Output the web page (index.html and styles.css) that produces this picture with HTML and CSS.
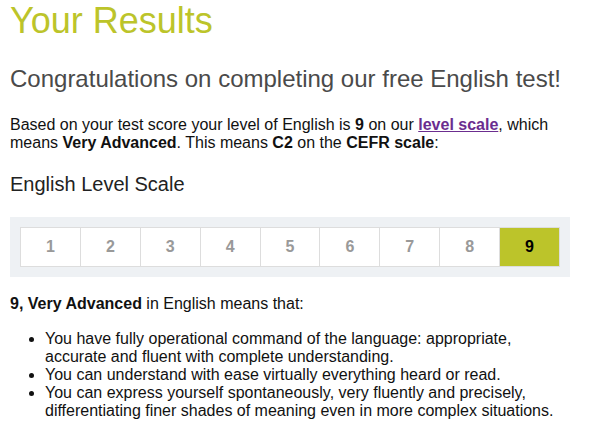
FILE: index.html
```html
<!DOCTYPE html>
<html lang="en">
<head>
    <meta charset="UTF-8">
    <meta name="viewport" content="width=device-width, initial-scale=1.0">
    <title>Your Results</title>
    <link rel="stylesheet" href="styles.css">
</head>
<body>
    <div class="page">
        <h1>Your Results</h1>
        <h2>Congratulations on completing our free English test!</h2>
        <p class="intro">Based on your test score your level of English is <b>9</b> on our <a href="#">level scale</a>, which means <b>Very Advanced</b>. This means <b>C2</b> on the <b>CEFR scale</b>:</p>

        <h3>English Level Scale</h3>
        <div class="scale">
            <span>1</span>
            <span>2</span>
            <span>3</span>
            <span>4</span>
            <span>5</span>
            <span>6</span>
            <span>7</span>
            <span>8</span>
            <span class="active">9</span>
        </div>

        <p class="meaning"><b>9, Very Advanced</b> in English means that:</p>
        <ul>
            <li>You have fully operational command of the language: appropriate, accurate and fluent with complete understanding.</li>
            <li>You can understand with ease virtually everything heard or read.</li>
            <li>You can express yourself spontaneously, very fluently and precisely, differentiating finer shades of meaning even in more complex situations.</li>
        </ul>
    </div>
</body>
</html>
```

FILE: styles.css
```css
body {
    font-family: Arial, "Liberation Sans", sans-serif;
    margin: 0;
    padding: 0;
    background: #fff;
    color: #111;
    font-size: 16px;
    line-height: 18px;
}
.page {
    max-width: 560px;
    padding: 0 10px;
}
h1 {
    font-size: 36px;
    line-height: 41px;
    font-weight: normal;
    color: #bcc42a;
    margin: 0;
}
h2 {
    font-size: 24px;
    line-height: 28px;
    font-weight: normal;
    color: #4a4a4a;
    margin: 24px 0 0;
}
.intro {
    margin: 23px 0 0;
}
.intro a {
    color: #6b2d8f;
    font-weight: bold;
}
h3 {
    font-size: 20px;
    line-height: 23px;
    font-weight: normal;
    color: #222;
    margin: 21px 0 0;
}
.scale {
    display: flex;
    margin-top: 21px;
    padding: 10px;
    background: #eef1f4;
}
.scale span {
    flex: 1;
    height: 40px;
    box-sizing: border-box;
    display: flex;
    align-items: center;
    justify-content: center;
    background: #fff;
    border: 1px solid #ddd;
    border-right: none;
    font-weight: bold;
    color: #999;
}
.scale span:last-child {
    border-right: 1px solid #ddd;
}
.scale .active {
    background: #bcc42a;
    color: #000;
}
.meaning {
    margin: 18px 0 0;
}
ul {
    margin: 17px 0 0;
    padding-left: 35px;
}
```
